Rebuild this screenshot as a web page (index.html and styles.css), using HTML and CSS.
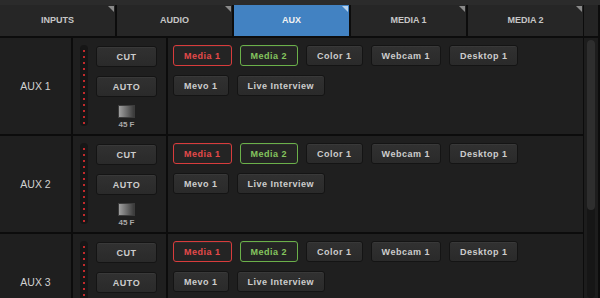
FILE: index.html
```html
<!DOCTYPE html>
<html>
<head>
<meta charset="utf-8">
<title>Aux outputs</title>
<link rel="stylesheet" href="styles.css">
</head>
<body>
<div class="app">
<div class="topbar"></div>
<div class="header">
<nav class="tabs">
<div class="tab">INPUTS</div>
<div class="tab">AUDIO</div>
<div class="tab active">AUX</div>
<div class="tab">MEDIA 1</div>
<div class="tab">MEDIA 2</div>
</nav>
<div class="header-end"></div>
</div>
<div class="main">
<div class="rows">

<div class="row">
<div class="label">AUX 1</div>
<div class="controls">
<div class="meter"><span></span><span></span><span></span><span></span><span></span><span></span><span></span><span></span><span></span><span></span><span></span><span></span><span></span></div>
<div class="actions">
<button class="btn">CUT</button>
<button class="btn">AUTO</button>
<div class="trans"></div>
<div class="dur">45 F</div>
</div>
</div>
<div class="sources">
<button class="btn src program">Media 1</button>
<button class="btn src preview">Media 2</button>
<button class="btn src">Color 1</button>
<button class="btn src">Webcam 1</button>
<button class="btn src">Desktop 1</button>
<button class="btn src">Mevo 1</button>
<button class="btn src">Live Interview</button>
</div>
</div>

<div class="row">
<div class="label">AUX 2</div>
<div class="controls">
<div class="meter"><span></span><span></span><span></span><span></span><span></span><span></span><span></span><span></span><span></span><span></span><span></span><span></span><span></span></div>
<div class="actions">
<button class="btn">CUT</button>
<button class="btn">AUTO</button>
<div class="trans"></div>
<div class="dur">45 F</div>
</div>
</div>
<div class="sources">
<button class="btn src program">Media 1</button>
<button class="btn src preview">Media 2</button>
<button class="btn src">Color 1</button>
<button class="btn src">Webcam 1</button>
<button class="btn src">Desktop 1</button>
<button class="btn src">Mevo 1</button>
<button class="btn src">Live Interview</button>
</div>
</div>

<div class="row">
<div class="label">AUX 3</div>
<div class="controls">
<div class="meter"><span></span><span></span><span></span><span></span><span></span><span></span><span></span><span></span><span></span><span></span><span></span><span></span><span></span></div>
<div class="actions">
<button class="btn">CUT</button>
<button class="btn">AUTO</button>
<div class="trans"></div>
<div class="dur">45 F</div>
</div>
</div>
<div class="sources">
<button class="btn src program">Media 1</button>
<button class="btn src preview">Media 2</button>
<button class="btn src">Color 1</button>
<button class="btn src">Webcam 1</button>
<button class="btn src">Desktop 1</button>
<button class="btn src">Mevo 1</button>
<button class="btn src">Live Interview</button>
</div>
</div>

</div>
<div class="scroll"><div class="track"><div class="thumb"></div></div></div>
</div>
</div>
</body>
</html>
```

FILE: styles.css
```css
html, body {
  margin: 0;
  height: 100%;
  overflow: hidden;
  background: #0c0c0c;
}
body {
  font-family: "Liberation Sans", Arial, sans-serif;
  color: #cfcfcf;
}
*, *:before, *:after { box-sizing: border-box; }

.app {
  width: 600px;
  height: 298px;
  overflow: hidden;
}
.topbar {
  height: 5px;
  background: #2b2b2b;
}

/* tabs */
.header {
  display: flex;
  padding-bottom: 2px;
  background: #0c0c0c;
}
.tabs {
  width: 583px;
  display: grid;
  grid-template-columns: repeat(5, 1fr);
  gap: 2px;
}
.tab {
  position: relative;
  height: 31px;
  line-height: 31px;
  text-align: center;
  background: #262626;
  font-size: 9px;
  font-weight: bold;
  color: #c6c6c6;
}
.tab:after {
  content: "";
  position: absolute;
  top: 1px;
  right: 1px;
  border-top: 6px solid #8a8a8a;
  border-left: 6px solid transparent;
}
.tab.active {
  background: #4282c2;
  color: #f2f2f2;
}
.tab.active:after { border-top-color: #b8d2ec; }
.header-end {
  flex: 1;
  margin-left: 1px;
  background: #242424;
  border-right: 2px solid #0c0c0c;
}

/* rows */
.main { display: flex; }
.rows { width: 583px; }
.row {
  display: grid;
  grid-template-columns: 71px 93px 1fr;
  gap: 2px;
  height: 96px;
  margin-bottom: 2px;
}
.label, .controls, .sources { background: #1f1f1f; }
.label {
  display: flex;
  align-items: center;
  justify-content: center;
  font-size: 10.5px;
  color: #d2d2d2;
}
.controls {
  display: flex;
  padding: 7px 0 0 7px;
}
.meter {
  width: 8px;
  height: 81px;
  border-radius: 4px;
  background: #161616;
  display: flex;
  flex-direction: column;
  align-items: center;
  gap: 4px;
  padding-top: 5px;
}
.meter span {
  width: 2px;
  height: 2px;
  background: #c22a2c;
}
.actions {
  width: 61px;
  margin-left: 8px;
  padding-top: 1px;
  display: flex;
  flex-direction: column;
  align-items: center;
}

.btn {
  height: 21px;
  padding: 0;
  border: 1px solid #141414;
  border-radius: 3px;
  background: linear-gradient(#313131, #2a2a2a);
  box-shadow: inset 0 1px 0 rgba(255,255,255,.04);
  font-family: "Liberation Sans", Arial, sans-serif;
  font-size: 9px;
  font-weight: bold;
  letter-spacing: .5px;
  color: #cdcdcd;
}
.actions .btn { width: 61px; }
.actions .btn + .btn { margin-top: 9px; }
.trans {
  width: 17px;
  height: 13px;
  margin-top: 8px;
  border: 1px solid #3c3c3c;
  background: linear-gradient(90deg, #a0a0a0, #3a3a3a);
}
.dur {
  margin-top: 2px;
  font-size: 8px;
  font-weight: bold;
  color: #a8a8a8;
}

.sources {
  display: flex;
  flex-wrap: wrap;
  align-content: flex-start;
  gap: 9px 8px;
  padding: 7px 5px;
}
.src { padding: 0 10px; }
.src.program {
  border-color: #d83c3c;
  color: #e44a4a;
  background: #242424;
}
.src.preview {
  border-color: #6bb04a;
  color: #84c45e;
  background: #242424;
}

/* scrollbar */
.scroll {
  flex: 1;
  margin-left: 1px;
  height: 262px;
  background: #1d1d1d;
  border-right: 2px solid #0c0c0c;
  padding: 2px 0 0 3px;
}
.track {
  width: 8px;
  height: 258px;
  border-radius: 4px;
  background: #161616;
}
.thumb {
  height: 170px;
  border-radius: 4px;
  background: #2e2e2e;
}
```
